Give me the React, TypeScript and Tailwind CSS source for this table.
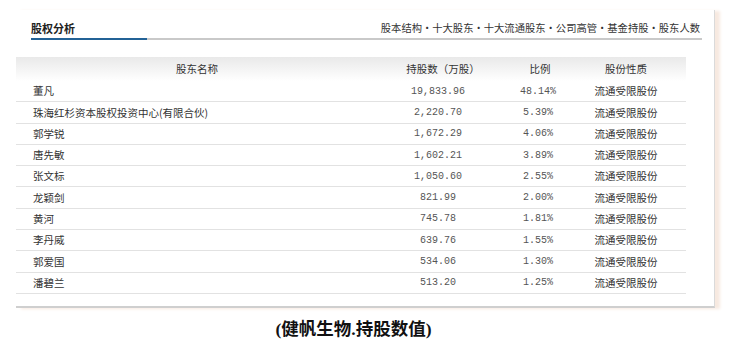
const rows = [
    { name: '董凡', shares: '19,833.96', ratio: '48.14%' },
    { name: '珠海红杉资本股权投资中心(有限合伙)', shares: '2,220.70', ratio: '5.39%' },
    { name: '郭学锐', shares: '1,672.29', ratio: '4.06%' },
    { name: '唐先敏', shares: '1,602.21', ratio: '3.89%' },
    { name: '张文标', shares: '1,050.60', ratio: '2.55%' },
    { name: '龙颖剑', shares: '821.99', ratio: '2.00%' },
    { name: '黄河', shares: '745.78', ratio: '1.81%' },
    { name: '李丹威', shares: '639.76', ratio: '1.55%' },
    { name: '郭爱国', shares: '534.06', ratio: '1.30%' },
    { name: '潘碧兰', shares: '513.20', ratio: '1.25%' },
];

const links = ['股本结构', '十大股东', '十大流通股东', '公司高管', '基金持股', '股东人数'];

const cjk = "font-['Noto_Sans_CJK_SC',sans-serif]";
const mono = "font-['Liberation_Mono','Noto_Sans_CJK_SC',monospace]";

const App = () => {
    return (
        <div className={`h-[361px] w-[737px] overflow-hidden bg-white pt-[10px] ${cjk}`}>
            {/* Panel */}
            <div className="ml-[16px] w-[699px] border-r border-b-2 border-r-[#dadada] border-b-[#cfcfcf] pb-[12px] shadow-[5px_1px_3px_#f7e9e0]">
                <div className="flex items-center justify-between pl-[15px] pr-[14px] pt-[11px]">
                    <h3 className="text-[11px] font-bold leading-[14px] text-[#222]">股权分析</h3>
                    <p className="text-[10.3px] leading-[14px] text-[#333]">
                        {links.join('・')}
                    </p>
                </div>
                <div className="ml-[15px] mr-[12px] mt-[3px] flex h-[2px]">
                    <div className="w-[116px] bg-[#236296]" />
                    <div className="flex-1 bg-[#c9c9c9]" />
                </div>

                {/* Table */}
                <div className="mt-[17px] w-[670px] text-[10.5px] text-[#333]">
                    <div className="grid h-[24px] grid-cols-[362px_130px_64px_114px] items-center bg-gradient-to-b from-[#e9e9e9] to-white text-center">
                        <div>股东名称</div>
                        <div>持股数（万股）</div>
                        <div>比例</div>
                        <div className="pr-[6px]">股份性质</div>
                    </div>
                    {rows.map((row) => (
                        <div
                            key={row.name}
                            className="grid h-[21.3px] grid-cols-[362px_130px_64px_114px] items-center border-b border-[#e2e2e2]"
                        >
                            <div className="pl-[17px]">{row.name}</div>
                            <div className={`pr-[10px] text-center text-[10px] text-[#555] ${mono}`}>{row.shares}</div>
                            <div className={`pr-[4px] text-center text-[10px] text-[#555] ${mono}`}>{row.ratio}</div>
                            <div className="pr-[6px] text-center">流通受限股份</div>
                        </div>
                    ))}
                </div>
            </div>

            {/* Caption */}
            <p className="mt-[11px] pr-[30px] text-center font-['Liberation_Serif','Noto_Sans_CJK_SC',serif] text-[17.5px] font-bold leading-[20px] text-[#111]">
                (健帆生物.持股数值)
            </p>
        </div>
    );
};

export default App;
